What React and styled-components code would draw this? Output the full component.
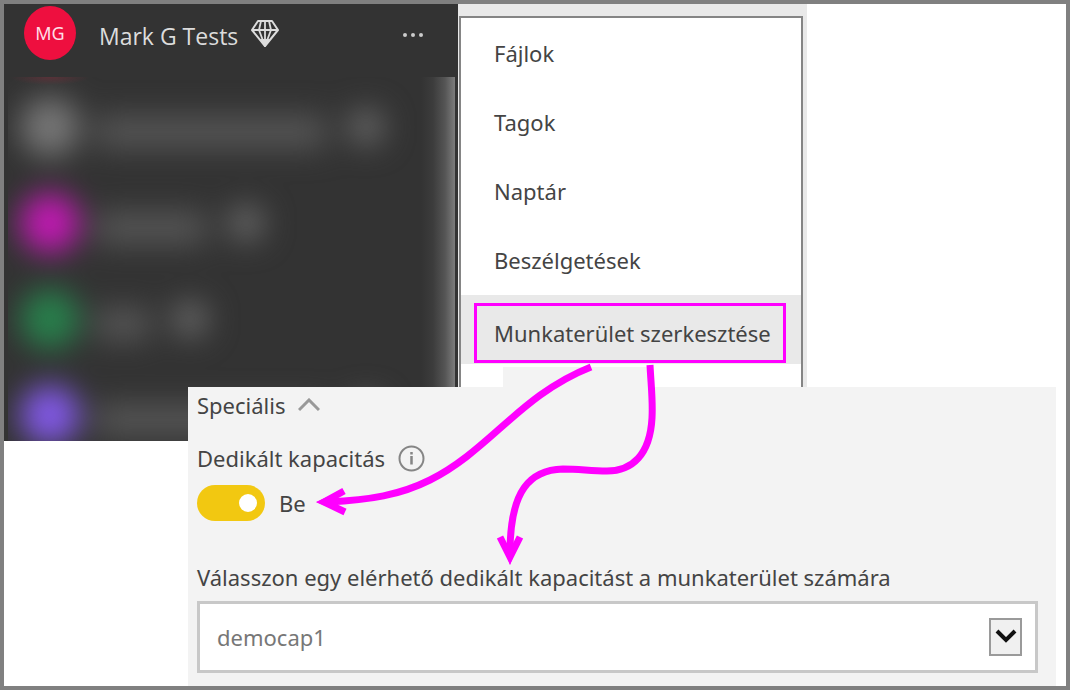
import React from "react";
import styled, { createGlobalStyle } from "styled-components";

const GlobalStyle = createGlobalStyle`
  *, *::before, *::after { box-sizing: border-box; }
  body {
    margin: 0;
    background: #fff;
    color: #444;
    font-family: "Noto Sans", "Open Sans", sans-serif;
    font-size: 22px;
    line-height: 32px;
  }
  button, select, input { font: inherit; color: inherit; }
`;

const Frame = styled.main`
  position: relative;
  display: grid;
  grid-template-columns: 184px 270px 349px minmax(0, 1fr);
  grid-template-rows: auto 54px 1fr;
  min-height: 100vh;
  border: 4px solid #808080;
  background: #fff;
`;

const Sidebar = styled.nav`
  grid-column: 1 / 3;
  grid-row: 1 / 3;
  display: flex;
  flex-direction: column;
  background: #333;
  overflow: hidden;
`;

const WorkspaceHeader = styled.header`
  display: flex;
  align-items: center;
  height: 73px;
  padding: 0 33px 10px 20px;
  color: #dcdcdc;
`;

const Avatar = styled.span`
  flex: none;
  width: 52px;
  height: 54px;
  margin-bottom: 6px;
  border-radius: 50%;
  background: #ee0f3f;
  color: #ffdfe6;
  font-size: 18px;
  line-height: 54px;
  text-align: center;
`;

const WorkspaceName = styled.span`
  margin: 0 13px 0 23px;
  font-family: "Open Sans", "Noto Sans", sans-serif;
  font-size: 23px;
  white-space: nowrap;
`;

const MoreButton = styled.button`
  display: flex;
  margin-left: auto;
  padding: 0;
  border: 0;
  background: none;
`;

const HiddenList = styled.div`
  position: relative;
  flex: 1 0 0;
  min-height: 0;
  margin: 0 3px 0 4px;
  overflow: hidden;
`;

const ListGlow = styled.div`
  position: absolute;
  inset: 0;
  background:
    linear-gradient(to left, #7c7c7c, #555 10px, #3c3c3c 22px, transparent 34px),
    radial-gradient(40px 8px at 42px 0, #8a2a3a66, transparent);
`;

const HiddenRows = styled.div`
  padding-top: 2px;
  filter: blur(15px);
`;

const HiddenRow = styled.div`
  display: flex;
  align-items: center;
  height: 96px;
  padding-left: 12px;
`;

const HiddenAvatar = styled.span`
  flex: none;
  width: 60px;
  height: 60px;
  border-radius: 50%;
  background: ${(p) => p.$color};
`;

const HiddenName = styled.span`
  width: ${(p) => p.$width}px;
  height: 32px;
  margin: 10px 22px 0 16px;
  background: #565656;
`;

const HiddenBadge = styled.span`
  width: 36px;
  height: 36px;
  border-radius: 50%;
  background: #686868;
`;

const MenuArea = styled.div`
  grid-column: 3;
  grid-row: 1;
  display: flex;
  flex-direction: column;
  padding: 12px 4px 0 1px;
  background: #e9e9e9;
`;

const Menu = styled.ul`
  margin: 0;
  padding: 1px 0 0;
  list-style: none;
  background: #fff;
  border: 2px solid #858585;
  border-width: 2px 2px 0;
`;

const MenuItem = styled.li`
  display: flex;
  height: 69px;
  padding: ${(p) => (p.$active ? "8px 15px 1px 13px" : "0 15px 2px 13px")};
  background: ${(p) => (p.$active ? "#e9e9e9" : "transparent")};
`;

const MenuButton = styled.button`
  flex: 1;
  padding: 0 0 0 17px;
  border: 3px solid ${(p) => (p.$active ? "#f0f" : "transparent")};
  background: none;
  text-align: left;
  white-space: nowrap;
`;

const MenuFooter = styled.li`
  width: 149px;
  height: 20px;
  margin: 3px 0 0 42px;
  background: #f3f3f3;
`;

const Panel = styled.section`
  grid-column: 2 / 5;
  grid-row: 2 / 4;
  z-index: 1;
  display: flex;
  flex-direction: column;
  align-items: flex-start;
  margin-right: 10px;
  padding: 2px 18px 12px 9px;
  background: #f3f3f3;
`;

const SectionToggle = styled.button`
  display: flex;
  align-items: center;
  gap: 13px;
  padding: 0;
  border: 0;
  background: none;
`;

const FieldTitle = styled.div`
  display: flex;
  align-items: center;
  gap: 13px;
  margin-top: 21px;
`;

const SwitchRow = styled.label`
  display: flex;
  align-items: center;
  gap: 14px;
  height: 36px;
  margin-top: 11px;
`;

const Switch = styled.input`
  appearance: none;
  display: flex;
  align-items: center;
  justify-content: flex-end;
  width: 68px;
  height: 36px;
  margin: 0;
  padding: 0 8px;
  border-radius: 18px;
  background: #f2c811;

  &::after {
    content: "";
    width: 18px;
    height: 18px;
    border-radius: 50%;
    background: #fff;
  }
  &:not(:checked) {
    justify-content: flex-start;
    background: #999;
  }
`;

const CapacityLabel = styled.label`
  margin-top: 40px;
`;

const SelectBox = styled.div`
  position: relative;
  align-self: stretch;
  margin-top: 8px;
`;

const Select = styled.select`
  appearance: none;
  display: block;
  width: 100%;
  height: 72px;
  padding: 0 60px 0 17px;
  border: 3px solid #c8c8c8;
  border-radius: 0;
  background: #fff;
  color: #777;
`;

const SelectArrow = styled.span`
  position: absolute;
  top: 17px;
  right: 16px;
  display: grid;
  place-items: center;
  width: 33px;
  height: 38px;
  border: 2px solid #9a9a9a;
  background: #f0f0f0;
  pointer-events: none;
`;

const Annotations = styled.svg`
  position: absolute;
  z-index: 2;
  top: 0;
  left: 0;
  pointer-events: none;
`;

const hiddenRows = [
  { color: "#767676", width: 230 },
  { color: "#c01ab2", width: 110 },
  { color: "#28804c", width: 54 },
  { color: "#8259e6", width: 230 },
];

const menuItems = ["Fájlok", "Tagok", "Naptár", "Beszélgetések", "Munkaterület szerkesztése"];

function Diamond() {
  return (
    <svg width="28" height="32" viewBox="0 0 28 32" fill="none" stroke="#dcdcdc" strokeWidth="2" strokeLinejoin="round" aria-hidden="true">
      <path d="M7 1H21L27 10L14 26L1 10Z" />
      <path d="M1 10H27M10 1L8 10L14 26L20 10L18 1M14 1V26" strokeWidth="1.8" />
      <path d="M9 19H19L14 27Z" fill="#dcdcdc" stroke="none" />
    </svg>
  );
}

function Arrows() {
  return (
    <Annotations width="700" height="600" viewBox="4 4 700 600" fill="none" stroke="#f0f" strokeWidth="7" aria-hidden="true">
      <path d="M591 367C520 395 490 450 430 480C400 495 370 500 328 502" />
      <path d="M344 491L324 502L345 512" />
      <path d="M338 492L316 502L338 511Z" fill="#f0f" stroke="none" />
      <path d="M650 365C651 385 653 400 652 418C650 455 632 471 607 471C590 471 580 469 563 469C530 470 510 490 510 553" />
      <path d="M500 537L510 557L520 537" />
      <path d="M502 543H518L510 565Z" fill="#f0f" stroke="none" />
    </Annotations>
  );
}

export default function App() {
  return (
    <>
      <GlobalStyle />
      <Frame>
        <Sidebar>
          <WorkspaceHeader>
            <Avatar>MG</Avatar>
            <WorkspaceName>Mark G Tests</WorkspaceName>
            <Diamond />
            <MoreButton aria-label="Mark G Tests">
              <svg width="24" height="8" viewBox="0 0 24 8" fill="#ccc" aria-hidden="true">
                <circle cx="4" cy="3" r="2" />
                <circle cx="12" cy="3" r="2" />
                <circle cx="20" cy="3" r="2" />
              </svg>
            </MoreButton>
          </WorkspaceHeader>
          <HiddenList aria-hidden="true">
            <HiddenRows>
              {hiddenRows.map((row) => (
                <HiddenRow key={row.color}>
                  <HiddenAvatar $color={row.color} />
                  <HiddenName $width={row.width} />
                  <HiddenBadge />
                </HiddenRow>
              ))}
            </HiddenRows>
            <ListGlow />
          </HiddenList>
        </Sidebar>

        <MenuArea>
          <Menu>
            {menuItems.map((label, i) => {
              const active = i === menuItems.length - 1;
              return (
                <MenuItem key={label} $active={active}>
                  <MenuButton $active={active}>{label}</MenuButton>
                </MenuItem>
              );
            })}
            <MenuFooter role="presentation" />
          </Menu>
        </MenuArea>

        <Panel>
          <SectionToggle aria-expanded="true">
            Speciális
            <svg width="22" height="14" viewBox="0 0 22 14" fill="none" stroke="#999" strokeWidth="3" aria-hidden="true">
              <path d="M1 12L11 2L21 12" />
            </svg>
          </SectionToggle>
          <FieldTitle>
            <span id="dedicated">Dedikált kapacitás</span>
            <svg width="27" height="27" viewBox="0 0 27 27" fill="none" stroke="#858585" strokeWidth="2" aria-hidden="true">
              <circle cx="13.500" cy="13.500" r="12" />
              <path d="M13.500 11V19.500M13.500 7V9.500" strokeWidth="2.500" />
            </svg>
          </FieldTitle>
          <SwitchRow>
            <Switch type="checkbox" defaultChecked aria-describedby="dedicated" />
            Be
          </SwitchRow>
          <CapacityLabel htmlFor="capacity">
            Válasszon egy elérhető dedikált kapacitást a munkaterület számára
          </CapacityLabel>
          <SelectBox>
            <Select id="capacity" defaultValue="democap1">
              <option>democap1</option>
            </Select>
            <SelectArrow>
              <svg width="22" height="16" viewBox="0 0 22 16" fill="none" stroke="#111" strokeWidth="4" aria-hidden="true">
                <path d="M2 2L11 11L20 2" />
              </svg>
            </SelectArrow>
          </SelectBox>
        </Panel>

        <Arrows />
      </Frame>
    </>
  );
}
